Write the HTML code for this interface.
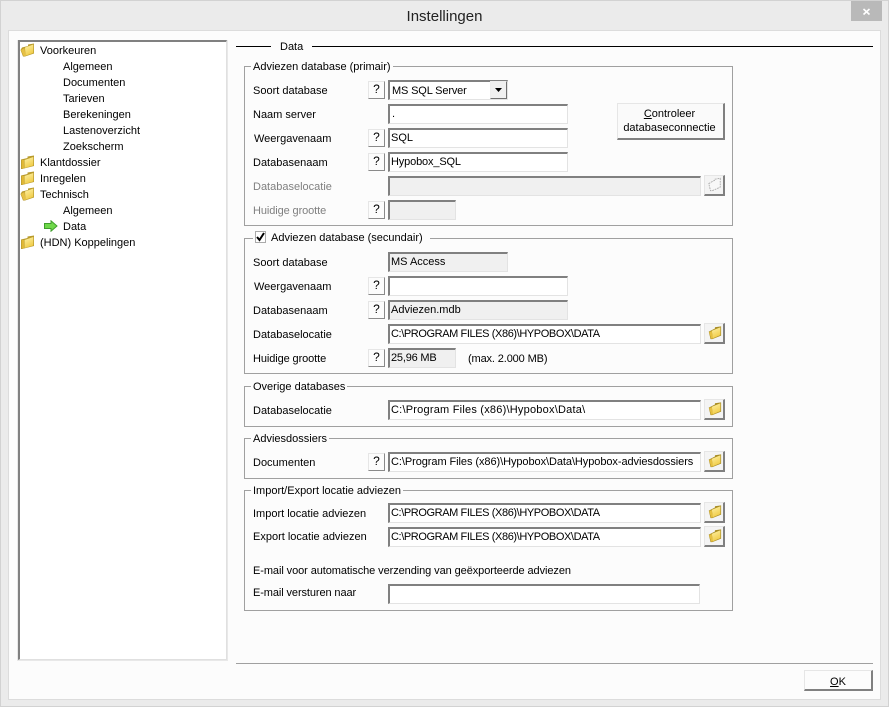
<!DOCTYPE html>
<html><head><meta charset="utf-8"><title>Instellingen</title>
<style>
html,body{margin:0;padding:0;width:889px;height:707px;overflow:hidden;background:#ebebeb}
body{position:relative;font:11px/14px "Liberation Sans",Arial,sans-serif;color:#000}
div,span.a{position:absolute;box-sizing:border-box}
.t{white-space:nowrap;height:14px;line-height:16px}
.d{color:#808080}
.g{border:1px solid #a0a0a0}
.lg{background:#fcfcfc;padding:0 2px;white-space:nowrap;height:14px;line-height:16px}
.i{height:20px;background:#fff;border:1px solid #e3e3e3;border-top:2px solid #808080;border-left:2px solid #808080;padding:0 0 0 1px;white-space:nowrap;overflow:hidden;line-height:17px}
.x{background:#f0f0f0}
.u{letter-spacing:-.4px}
.q{width:17px;height:18px;background:#fcfcfc;border:1px solid #e6e6e6;border-right:1px solid #8a8a8a;border-bottom:1px solid #8a8a8a;text-align:center;line-height:14px;font-size:12px}
.b{width:21px;height:21px;background:#f4f4f4;border:1px solid #e6e6e6;border-right:2px solid #808080;border-bottom:2px solid #808080}
.b svg{position:absolute;left:2px;top:1px}
.f{position:absolute;left:20px}
</style></head><body>
<svg width="0" height="0" style="position:absolute"><defs>
<linearGradient id="yg" x1="0" y1="0" x2="0.4" y2="1"><stop offset="0" stop-color="#fff3a8"/><stop offset="1" stop-color="#f0cc48"/></linearGradient>
<symbol id="fo" viewBox="0 0 15 14">
<path d="M2 4.500L8 3V1.500L14 .5V10.500L5 13.500H3L.5 7Z" fill="#b89a2c"/>
<path d="M5 4.500L13.300 1.500V10L5.500 12.700Z" fill="url(#yg)"/>
<path d="M1 7L4.500 5L5.500 13H3.500Z" fill="#e6c044"/>
</symbol>
<symbol id="fc" viewBox="0 0 15 14">
<path d="M1 4.500L7.500 3V1.500L14 .5V11L2 14H1Z" fill="#b89a2c"/>
<path d="M4.500 5L13.300 2V10.500L4.500 13Z" fill="url(#yg)"/>
<path d="M1.700 5H4V13.300H1.700Z" fill="#e0b836"/>
</symbol>
<symbol id="bf" viewBox="0 0 17 16">
<path d="M2 7L9 3.500V2L16 1V11.500L6 15.500H4Z" fill="#a88c24"/>
<path d="M5.500 6L15.200 2V11L6.500 14.700Z" fill="url(#yg)"/>
<path d="M2.500 7.500L5.500 6.500L6.500 15H4.500Z" fill="#e6c040"/>
</symbol>
</defs></svg>

<!-- window frame -->
<div style="left:0;top:0;width:889px;height:707px;border:1px solid #d2d2d2"></div>
<div style="left:8px;top:30px;width:873px;height:670px;background:#fcfcfc;border:1px solid #dcdcdc"></div>
<div class="t" style="left:0;top:7px;width:889px;height:18px;line-height:20px;text-align:center;font-size:15px;color:#222">Instellingen</div>
<div style="left:851px;top:1px;width:31px;height:20px;background:#b9b9b9;color:#fff;text-align:center">
<svg width="31" height="20" style="position:absolute;left:0;top:0"><path d="M12.500 8L18.500 13.500M18.500 8L12.500 13.500" stroke="#fff" stroke-width="1.600"/></svg></div>

<!-- tree -->
<div style="left:17px;top:40px;width:211px;height:621px;background:#fff;border:1px solid #e8e8e8;border-top:none;border-left:1px solid #e8e8e8"></div>
<div style="left:18px;top:40px;width:209px;height:620px;background:#fff;border-top:2px solid #808080;border-left:2px solid #808080;border-right:1px solid #e0e0e0;border-bottom:1px solid #e0e0e0"></div>
<svg class="f" width="15" height="14" style="top:43px"><use href="#fo"/></svg>
<div class="t" style="left:40px;top:43px">Voorkeuren</div>
<div class="t" style="left:63px;top:59px">Algemeen</div>
<div class="t" style="left:63px;top:75px">Documenten</div>
<div class="t" style="left:63px;top:91px">Tarieven</div>
<div class="t" style="left:63px;top:107px">Berekeningen</div>
<div class="t" style="left:63px;top:123px">Lastenoverzicht</div>
<div class="t" style="left:63px;top:139px">Zoekscherm</div>
<svg class="f" width="15" height="14" style="top:155px"><use href="#fc"/></svg>
<div class="t" style="left:40px;top:155px">Klantdossier</div>
<svg class="f" width="15" height="14" style="top:171px"><use href="#fc"/></svg>
<div class="t" style="left:40px;top:171px">Inregelen</div>
<svg class="f" width="15" height="14" style="top:187px"><use href="#fo"/></svg>
<div class="t" style="left:40px;top:187px">Technisch</div>
<div class="t" style="left:63px;top:203px">Algemeen</div>
<svg width="14" height="12" style="position:absolute;left:44px;top:220px"><path d="M.5 3.500H7V.8L13 6L7 11.200V8.500H.5Z" fill="#6fd84a" stroke="#3f9e2c"/></svg>
<div class="t" style="left:63px;top:219px">Data</div>
<svg class="f" width="15" height="14" style="top:235px"><use href="#fc"/></svg>
<div class="t" style="left:40px;top:235px">(HDN) Koppelingen</div>

<!-- data header -->
<div style="left:236px;top:46px;width:35px;height:1px;background:#000"></div>
<div style="left:312px;top:46px;width:561px;height:1px;background:#000"></div>
<div class="t" style="left:280px;top:39px">Data</div>

<!-- group 1 -->
<div class="g" style="left:244px;top:66px;width:489px;height:160px"></div>
<div class="lg" style="left:251px;top:59px">Adviezen database (primair)</div>
<div class="t" style="left:253px;top:83px">Soort database</div>
<div class="q" style="left:368px;top:81px">?</div>
<div class="i" style="left:388px;top:80px;width:120px;padding-left:2px;line-height:18px;letter-spacing:-.15px">MS SQL Server</div>
<div style="left:490px;top:81px;width:17px;height:18px;background:#f0f0f0;border:1px solid #eee;border-right:1px solid #707070;border-bottom:1px solid #707070"><svg width="15" height="16" style="position:absolute;left:0;top:0"><path d="M4 6H11L7.500 10Z" fill="#000"/></svg></div>
<div class="t" style="left:253px;top:107px">Naam server</div>
<div class="i" style="left:388px;top:104px;width:180px;padding-left:2px">.</div>
<div class="t" style="left:254px;top:131px">Weergavenaam</div>
<div class="q" style="left:368px;top:129px">?</div>
<div class="i" style="left:388px;top:128px;width:180px">SQL</div>
<div class="t" style="left:253px;top:155px">Databasenaam</div>
<div class="q" style="left:368px;top:153px">?</div>
<div class="i" style="left:388px;top:152px;width:180px;letter-spacing:-.15px">Hypobox_SQL</div>
<div class="t d" style="left:253px;top:179px">Databaselocatie</div>
<div class="i x" style="left:388px;top:176px;width:313px"></div>
<div class="b" style="left:704px;top:175px;width:21px;height:21px"><svg width="15" height="15" viewBox="0 0 17 16"><path d="M2 7L9 3V2L15 1V11L6 15H4Z" fill="#f8f8f8" stroke="#a8a8a8" stroke-dasharray="2 1"/></svg></div>
<div class="t d" style="left:253px;top:203px;letter-spacing:-.1px">Huidige grootte</div>
<div class="q" style="left:368px;top:201px">?</div>
<div class="i x" style="left:388px;top:200px;width:68px"></div>
<div style="left:617px;top:103px;width:108px;height:37px;background:#fafafa;border:1px solid #e6e6e6;border-right:2px solid #808080;border-bottom:2px solid #808080;text-align:center;padding:3px 2px 0 0"><u>C</u>ontroleer<br>databaseconnectie</div>

<!-- group 2 -->
<div class="g" style="left:244px;top:238px;width:489px;height:136px"></div>
<div class="lg" style="left:253px;top:230px;width:177px;height:14px"></div>
<div style="left:255px;top:231px;width:11px;height:12px;background:#fff;border:1px solid #aaa"><svg width="9" height="10" style="position:absolute;left:0;top:0"><path d="M1 5L3.500 8L8 1" fill="none" stroke="#000" stroke-width="2"/></svg></div>
<div class="t" style="left:271px;top:230px">Adviezen database (secundair)</div>
<div class="t" style="left:253px;top:255px">Soort database</div>
<div class="i x" style="left:388px;top:252px;width:120px">MS Access</div>
<div class="t" style="left:254px;top:279px">Weergavenaam</div>
<div class="q" style="left:368px;top:277px">?</div>
<div class="i" style="left:388px;top:276px;width:180px"></div>
<div class="t" style="left:253px;top:303px">Databasenaam</div>
<div class="q" style="left:368px;top:301px">?</div>
<div class="i x" style="left:388px;top:300px;width:180px">Adviezen.mdb</div>
<div class="t" style="left:253px;top:327px">Databaselocatie</div>
<div class="i u" style="left:388px;top:324px;width:313px">C:\PROGRAM FILES (X86)\HYPOBOX\DATA</div>
<div class="b" style="left:704px;top:323px"><svg width="15" height="15"><use href="#bf"/></svg></div>
<div class="t" style="left:253px;top:351px;letter-spacing:-.1px">Huidige grootte</div>
<div class="q" style="left:368px;top:349px">?</div>
<div class="i x" style="left:388px;top:348px;width:68px;letter-spacing:-.2px">25,96 MB</div>
<div class="t" style="left:468px;top:351px;letter-spacing:-.13px">(max. 2.000 MB)</div>

<!-- group 3 -->
<div class="g" style="left:244px;top:386px;width:489px;height:41px"></div>
<div class="lg" style="left:251px;top:379px">Overige databases</div>
<div class="t" style="left:253px;top:403px">Databaselocatie</div>
<div class="i" style="left:388px;top:400px;width:313px;letter-spacing:.22px">C:\Program Files (x86)\Hypobox\Data\</div>
<div class="b" style="left:704px;top:399px"><svg width="15" height="15"><use href="#bf"/></svg></div>

<!-- group 4 -->
<div class="g" style="left:244px;top:438px;width:489px;height:41px"></div>
<div class="lg" style="left:251px;top:431px">Adviesdossiers</div>
<div class="t" style="left:253px;top:455px">Documenten</div>
<div class="q" style="left:368px;top:453px">?</div>
<div class="i" style="left:388px;top:452px;width:313px;letter-spacing:-.07px">C:\Program Files (x86)\Hypobox\Data\Hypobox-adviesdossiers</div>
<div class="b" style="left:704px;top:451px"><svg width="15" height="15"><use href="#bf"/></svg></div>

<!-- group 5 -->
<div class="g" style="left:244px;top:490px;width:489px;height:121px"></div>
<div class="lg" style="left:251px;top:483px">Import/Export locatie adviezen</div>
<div class="t" style="left:253px;top:506px">Import locatie adviezen</div>
<div class="i u" style="left:388px;top:503px;width:313px">C:\PROGRAM FILES (X86)\HYPOBOX\DATA</div>
<div class="b" style="left:704px;top:502px"><svg width="15" height="15"><use href="#bf"/></svg></div>
<div class="t" style="left:253px;top:529px">Export locatie adviezen</div>
<div class="i u" style="left:388px;top:527px;width:313px">C:\PROGRAM FILES (X86)\HYPOBOX\DATA</div>
<div class="b" style="left:704px;top:526px"><svg width="15" height="15"><use href="#bf"/></svg></div>
<div class="t" style="left:253px;top:563px;letter-spacing:-.08px">E-mail voor automatische verzending van geëxporteerde adviezen</div>
<div class="t" style="left:253px;top:585px;letter-spacing:-.1px">E-mail versturen naar</div>
<div class="i" style="left:388px;top:584px;width:312px"></div>

<!-- bottom -->
<div style="left:236px;top:663px;width:637px;height:1px;background:#a0a0a0"></div>
<div style="left:804px;top:670px;width:69px;height:21px;background:#fcfcfc;border:1px solid #e6e6e6;border-right:2px solid #808080;border-bottom:2px solid #808080;text-align:center;padding-top:4px"><u>O</u>K</div>
</body></html>
